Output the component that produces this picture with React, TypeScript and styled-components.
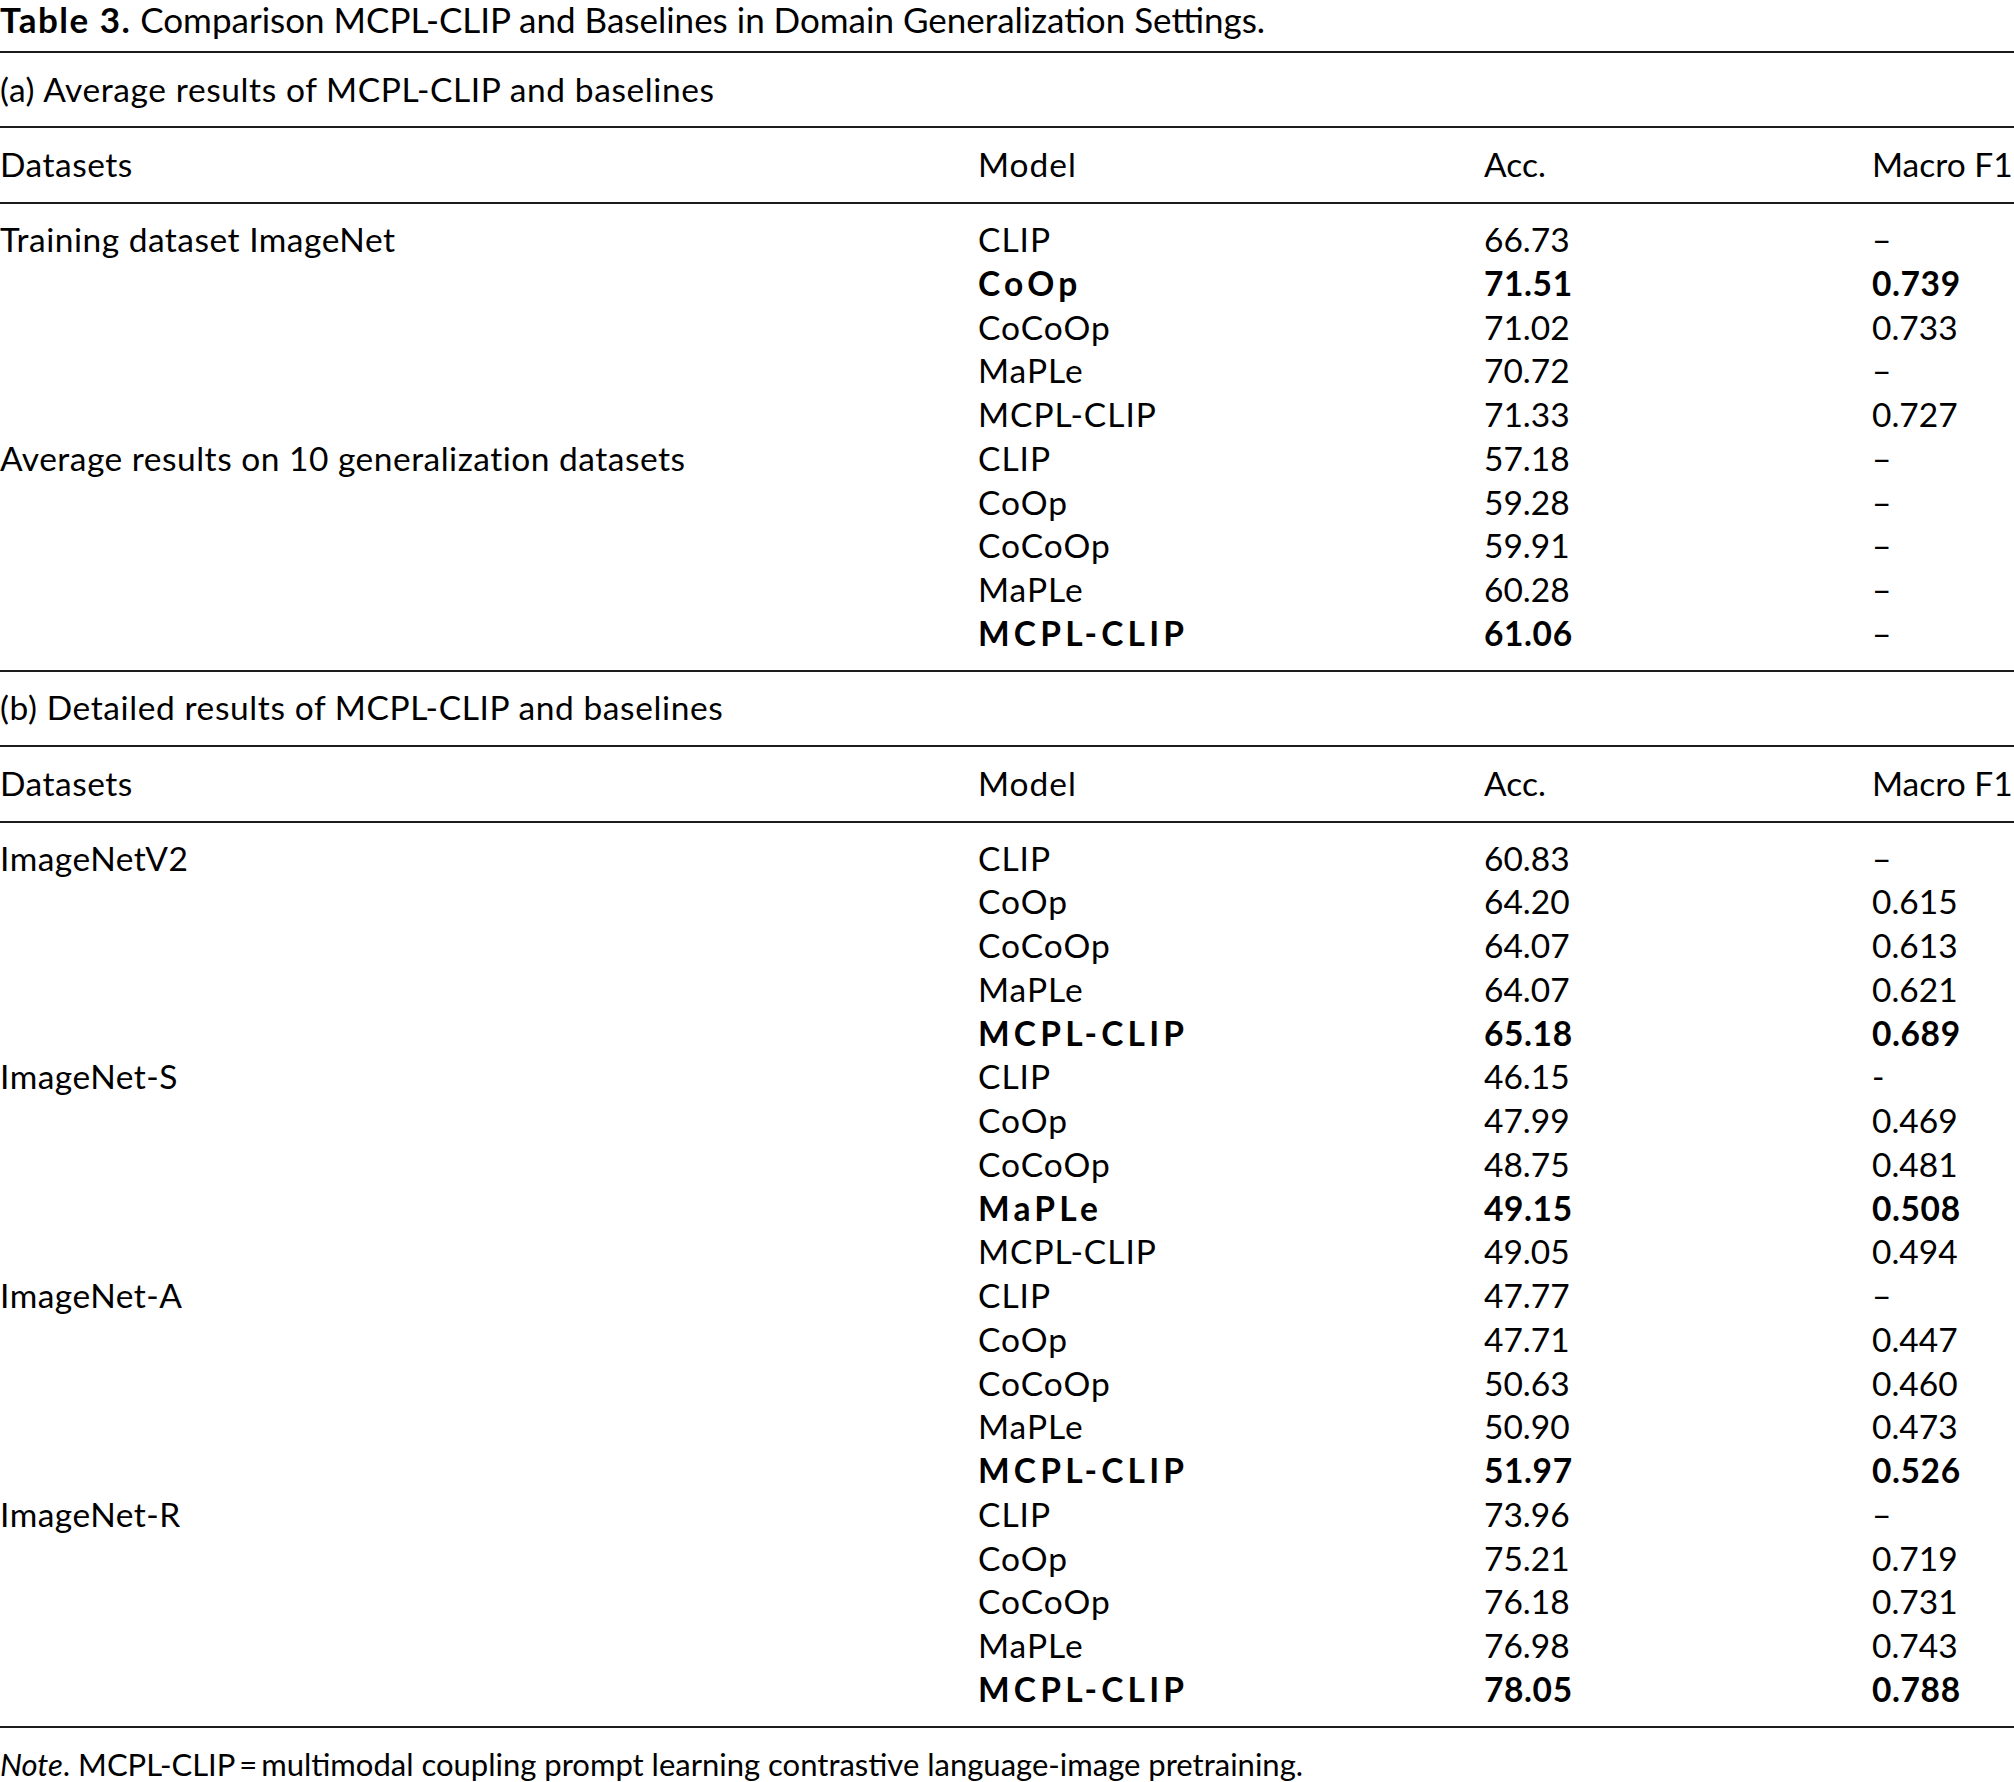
import React from "react";
import styled, { createGlobalStyle } from "styled-components";

const Global = createGlobalStyle`
  html, body { margin: 0; padding: 0; background: #ffffff; }
  body { font-family: "Lato", "Open Sans", sans-serif; color: #000; }
`;

const FS = "33.5px";
const ROW = "43.75px";

const Page = styled.div`
  width: 2014px;
  font-size: ${FS};
`;

const Title = styled.div`
  font-size: 35px;
  line-height: 38px;
  height: 38px;
  margin-bottom: 13px;
  white-space: nowrap;
`;

const Strong = styled.span`
  font-weight: 700;
  letter-spacing: 1.5px;
`;

const Section = styled.section<{ $last?: boolean }>`
  border-top: 2px solid #1c1c1c;
  border-bottom: ${(p) => (p.$last ? "2px solid #1c1c1c" : "none")};
`;

const Caption = styled.div`
  height: 73px;
  display: flex;
  align-items: center;
  line-height: ${ROW};
  letter-spacing: 0.6px;
`;

const Grid = styled.div`
  display: grid;
  grid-template-columns: 978px 506px 388px 1fr;
`;

const Header = styled(Grid)`
  height: 74px;
  align-items: center;
  line-height: ${ROW};
  border-top: 2px solid #1c1c1c;
  border-bottom: 2px solid #1c1c1c;
`;

const Body = styled(Grid)`
  padding: 14px 0;
  grid-auto-rows: ${ROW};
  line-height: ${ROW};
`;

type Kind = "text" | "model" | "num";

const Cell = styled.div<{ $bold?: boolean; $kind?: Kind }>`
  font-weight: ${(p) => (p.$bold ? 700 : 400)};
  white-space: nowrap;
  letter-spacing: ${(p) =>
    p.$kind === "model"
      ? p.$bold
        ? "4.2px"
        : "1px"
      : p.$kind === "text"
      ? "0.5px"
      : p.$bold
      ? "0.6px"
      : "0px"};
`;

const Note = styled.div`
  font-size: 31px;
  padding-top: 16px;
  line-height: 40px;
  white-space: nowrap;
`;

const Em = styled.em`
  font-style: italic;
`;

type Row = { ds?: string; model: string; acc: string; f1: string; bm?: boolean; bf?: boolean };

const secA: Row[] = [
  { ds: "Training dataset ImageNet", model: "CLIP", acc: "66.73", f1: "–" },
  { model: "CoOp", acc: "71.51", f1: "0.739", bm: true, bf: true },
  { model: "CoCoOp", acc: "71.02", f1: "0.733" },
  { model: "MaPLe", acc: "70.72", f1: "–" },
  { model: "MCPL-CLIP", acc: "71.33", f1: "0.727" },
  { ds: "Average results on 10 generalization datasets", model: "CLIP", acc: "57.18", f1: "–" },
  { model: "CoOp", acc: "59.28", f1: "–" },
  { model: "CoCoOp", acc: "59.91", f1: "–" },
  { model: "MaPLe", acc: "60.28", f1: "–" },
  { model: "MCPL-CLIP", acc: "61.06", f1: "–", bm: true },
];

const secB: Row[] = [
  { ds: "ImageNetV2", model: "CLIP", acc: "60.83", f1: "–" },
  { model: "CoOp", acc: "64.20", f1: "0.615" },
  { model: "CoCoOp", acc: "64.07", f1: "0.613" },
  { model: "MaPLe", acc: "64.07", f1: "0.621" },
  { model: "MCPL-CLIP", acc: "65.18", f1: "0.689", bm: true, bf: true },
  { ds: "ImageNet-S", model: "CLIP", acc: "46.15", f1: "-" },
  { model: "CoOp", acc: "47.99", f1: "0.469" },
  { model: "CoCoOp", acc: "48.75", f1: "0.481" },
  { model: "MaPLe", acc: "49.15", f1: "0.508", bm: true, bf: true },
  { model: "MCPL-CLIP", acc: "49.05", f1: "0.494" },
  { ds: "ImageNet-A", model: "CLIP", acc: "47.77", f1: "–" },
  { model: "CoOp", acc: "47.71", f1: "0.447" },
  { model: "CoCoOp", acc: "50.63", f1: "0.460" },
  { model: "MaPLe", acc: "50.90", f1: "0.473" },
  { model: "MCPL-CLIP", acc: "51.97", f1: "0.526", bm: true, bf: true },
  { ds: "ImageNet-R", model: "CLIP", acc: "73.96", f1: "–" },
  { model: "CoOp", acc: "75.21", f1: "0.719" },
  { model: "CoCoOp", acc: "76.18", f1: "0.731" },
  { model: "MaPLe", acc: "76.98", f1: "0.743" },
  { model: "MCPL-CLIP", acc: "78.05", f1: "0.788", bm: true, bf: true },
];

function Block({ caption, rows, last }: { caption: string; rows: Row[]; last?: boolean }) {
  return (
    <Section $last={last}>
      <Caption>{caption}</Caption>
      <Header>
        <Cell $kind="text">Datasets</Cell>
        <Cell $kind="model">Model</Cell>
        <Cell $kind="num">Acc.</Cell>
        <Cell $kind="num">Macro F1</Cell>
      </Header>
      <Body>
        {rows.map((r, i) => (
          <React.Fragment key={i}>
            <Cell $kind="text">{r.ds ?? ""}</Cell>
            <Cell $kind="model" $bold={r.bm}>{r.model}</Cell>
            <Cell $kind="num" $bold={r.bm}>{r.acc}</Cell>
            <Cell $kind="num" $bold={r.bf}>{r.f1}</Cell>
          </React.Fragment>
        ))}
      </Body>
    </Section>
  );
}

export default function App() {
  return (
    <Page>
      <Global />
      <Title>
        <Strong>Table 3.</Strong> Comparison MCPL-CLIP and Baselines in Domain Generalization Settings.
      </Title>
      <Block caption="(a) Average results of MCPL-CLIP and baselines" rows={secA} />
      <Block caption="(b) Detailed results of MCPL-CLIP and baselines" rows={secB} last />
      <Note>
        <Em>Note</Em>. MCPL-CLIP{"\u2009"}={"\u2009"}multimodal coupling prompt learning contrastive language-image pretraining.
      </Note>
    </Page>
  );
}
